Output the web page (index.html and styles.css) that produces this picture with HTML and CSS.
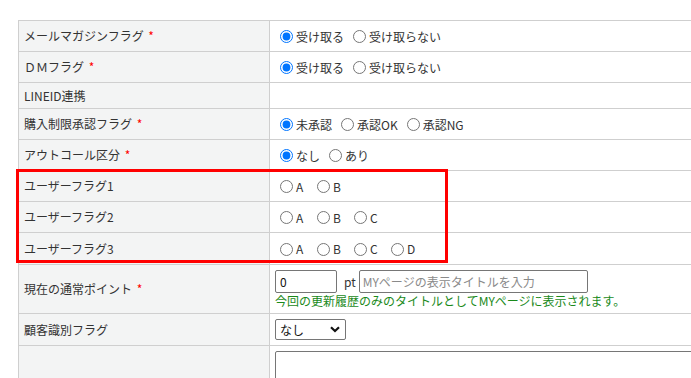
FILE: index.html
```html
<!DOCTYPE html>
<html lang="ja">
<head>
<meta charset="utf-8">
<link rel="stylesheet" href="styles.css">
</head>
<body>
<div class="page">
  <table class="form">
    <tr class="h31">
      <td class="label">メールマガジンフラグ <span class="req">*</span></td>
      <td class="value"><div class="opts">
        <label class="opt"><input type="radio" name="mm" checked>受け取る</label>
        <label class="opt"><input type="radio" name="mm">受け取らない</label>
      </div></td>
    </tr>
    <tr class="h31">
      <td class="label">ＤＭフラグ <span class="req">*</span></td>
      <td class="value"><div class="opts">
        <label class="opt"><input type="radio" name="dm" checked>受け取る</label>
        <label class="opt"><input type="radio" name="dm">受け取らない</label>
      </div></td>
    </tr>
    <tr class="h26">
      <td class="label">LINEID連携</td>
      <td class="value"></td>
    </tr>
    <tr class="h31">
      <td class="label">購入制限承認フラグ <span class="req">*</span></td>
      <td class="value"><div class="opts">
        <label class="opt"><input type="radio" name="ap" checked>未承認</label>
        <label class="opt"><input type="radio" name="ap">承認OK</label>
        <label class="opt"><input type="radio" name="ap">承認NG</label>
      </div></td>
    </tr>
    <tr class="h31">
      <td class="label">アウトコール区分 <span class="req">*</span></td>
      <td class="value"><div class="opts">
        <label class="opt"><input type="radio" name="oc" checked>なし</label>
        <label class="opt"><input type="radio" name="oc">あり</label>
      </div></td>
    </tr>
    <tr class="h31">
      <td class="label">ユーザーフラグ1</td>
      <td class="value"><div class="opts">
        <label class="opt fixed"><input type="radio" name="u1">A</label>
        <label class="opt fixed"><input type="radio" name="u1">B</label>
      </div></td>
    </tr>
    <tr class="h31">
      <td class="label">ユーザーフラグ2</td>
      <td class="value"><div class="opts">
        <label class="opt fixed"><input type="radio" name="u2">A</label>
        <label class="opt fixed"><input type="radio" name="u2">B</label>
        <label class="opt fixed"><input type="radio" name="u2">C</label>
      </div></td>
    </tr>
    <tr class="h32">
      <td class="label">ユーザーフラグ3</td>
      <td class="value"><div class="opts">
        <label class="opt fixed"><input type="radio" name="u3">A</label>
        <label class="opt fixed"><input type="radio" name="u3">B</label>
        <label class="opt fixed"><input type="radio" name="u3">C</label>
        <label class="opt fixed"><input type="radio" name="u3">D</label>
      </div></td>
    </tr>
    <tr>
      <td class="label">現在の通常ポイント <span class="req">*</span></td>
      <td class="value pad">
        <div class="points">
          <input class="txt pt-input" type="text" value="0">
          <span class="unit">pt</span>
          <input class="txt title-input" type="text" placeholder="MYページの表示タイトルを入力">
        </div>
        <div class="note">今回の更新履歴のみのタイトルとしてMYページに表示されます。</div>
      </td>
    </tr>
    <tr>
      <td class="label">顧客識別フラグ</td>
      <td class="value pad">
        <div class="select-wrap">
          <select class="sel"><option>なし</option></select>
          <svg class="chev" width="10" height="7" viewBox="0 0 10 7"><path d="M1 1.2 L5 5 L9 1.2" fill="none" stroke="#111" stroke-width="2.2"/></svg>
        </div>
      </td>
    </tr>
    <tr>
      <td class="label"></td>
      <td class="value pad"><textarea class="area"></textarea></td>
    </tr>
  </table>
  <div class="highlight"></div>
</div>
</body>
</html>
```
FILE: styles.css
```css
html, body {
  margin: 0;
  padding: 0;
  background: #fff;
  overflow: hidden;
}
body {
  font-family: "Noto Sans CJK JP", "Noto Sans", sans-serif;
  font-size: 12px;
  color: #333;
  line-height: 16px;
}
.page {
  position: relative;
  padding: 20px 0 0 18px;
  width: 1100px;
  height: 378px;
}
.form {
  border-collapse: collapse;
  width: 1000px;
}
.form td {
  border: 1px solid #cfcfcf;
  padding: 0 5px;
  vertical-align: middle;
}
.form tr.h31 { height: 31px; }
.form tr.h26 { height: 26px; }
.form tr.h32 { height: 32px; }
.label {
  width: 240px;
  background: #f3f4f4;
  color: #333;
}
.req {
  color: #ff0000;
  margin-left: 2px;
}
.value {
  background: #fff;
}
.value.pad {
  padding-top: 5px;
  padding-bottom: 5px;
}
.opts {
  display: flex;
  align-items: center;
  height: 20px;
  padding-top: 1px;
}
.opt {
  display: inline-flex;
  align-items: center;
  margin-right: 4px;
  color: #333;
}
.opt input {
  width: 13px;
  height: 13px;
  margin: 0 3px 0 5px;
}
.opt.fixed {
  width: 37px;
  margin-right: 0;
}
.points {
  display: flex;
  align-items: center;
  height: 23px;
}
.txt {
  box-sizing: border-box;
  height: 23px;
  margin: 0;
  border: 1px solid #767676;
  border-radius: 2px;
  padding: 0 3px;
  font-family: "Noto Sans CJK JP", "Noto Sans", sans-serif;
  font-size: 12px;
  color: #111;
}
.txt::placeholder {
  color: #8a8a8a;
}
.pt-input {
  width: 62px;
  padding-left: 4px;
}
.unit {
  margin: 0 3px 0 7px;
  color: #333;
}
.title-input {
  width: 229px;
}
.note {
  color: #1a8a1a;
  line-height: 15px;
  margin-top: 0;
}
.select-wrap {
  position: relative;
  width: 71px;
  height: 21px;
}
.sel {
  appearance: none;
  -webkit-appearance: none;
  box-sizing: border-box;
  width: 71px;
  height: 21px;
  margin: 0;
  padding: 0 4px;
  border: 1px solid #767676;
  border-radius: 2px;
  background: #fff;
  font-family: "Noto Sans CJK JP", "Noto Sans", sans-serif;
  font-size: 12px;
  color: #111;
}
.chev {
  position: absolute;
  right: 6px;
  top: 7px;
  pointer-events: none;
}
.area {
  display: block;
  box-sizing: border-box;
  width: 700px;
  height: 60px;
  margin: 0;
  border: 1px solid #767676;
  border-radius: 2px;
  resize: none;
}
.highlight {
  position: absolute;
  left: 16px;
  top: 169px;
  width: 426px;
  height: 88px;
  border: 3px solid #ff0000;
  pointer-events: none;
}
```
